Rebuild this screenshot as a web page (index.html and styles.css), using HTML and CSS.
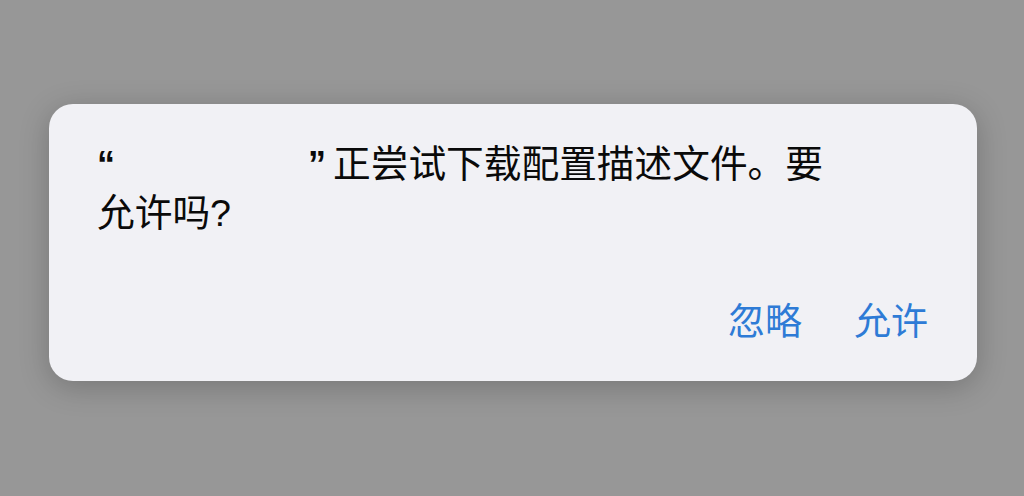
FILE: index.html
```html
<!DOCTYPE html>
<html lang="zh-CN">
<head>
<meta charset="utf-8">
<link rel="stylesheet" href="styles.css">
</head>
<body>
  <div class="alert">
    <p class="message"><span class="q">“</span><span class="name"></span><span class="q q-close">”</span>正尝试下载配置描述文件。要<br>允许吗?</p>
    <div class="actions">
      <span class="btn">忽略</span>
      <span class="btn">允许</span>
    </div>
  </div>
</body>
</html>
```
FILE: styles.css
```css
html, body {
  margin: 0;
  height: 100%;
}
body {
  background: #979797;
  padding: 104px 47px 0 49px;
  box-sizing: border-box;
  font-family: "Liberation Sans", "Noto Sans CJK SC", sans-serif;
}
.alert {
  width: 928px;
  height: 277px;
  box-sizing: border-box;
  background: #f1f1f5;
  border-radius: 24px;
  box-shadow: 0 6px 30px rgba(0, 0, 0, 0.22);
  padding: 36px 49px 0 48px;
  display: flex;
  flex-direction: column;
}
.message {
  margin: 0;
  font-size: 37.7px;
  line-height: 49px;
  color: #0a0a0a;
}
.q {
  font-weight: 700;
  font-size: 36px;
}
.q-close {
  margin-right: 7px;
}
.name {
  display: inline-block;
  width: 193px;
}
.actions {
  margin-top: auto;
  margin-bottom: 36px;
  display: flex;
  justify-content: flex-end;
  gap: 52px;
}
.btn {
  font-size: 37px;
  line-height: 44px;
  color: #2e7bd6;
}
```
